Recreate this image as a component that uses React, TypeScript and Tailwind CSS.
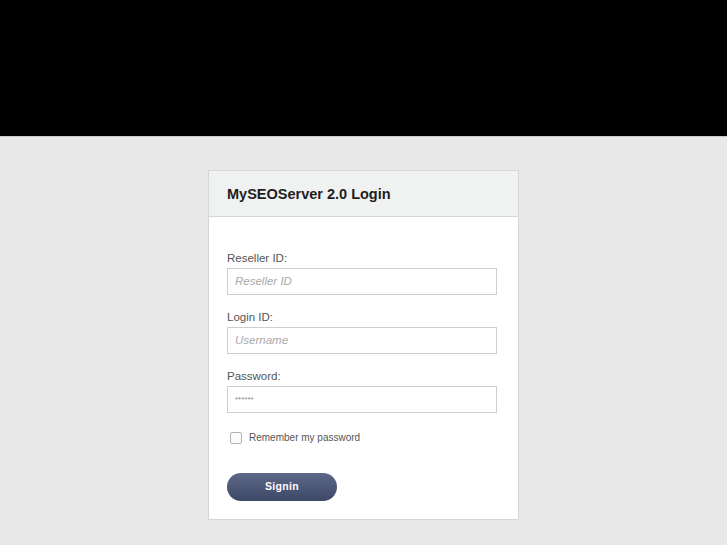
export default function App() {
  return (
    <div className="w-full min-h-[545px] flex flex-col bg-[#e8e8e8] font-['Liberation_Sans',Arial,sans-serif]">
      <div className="w-full h-[136px] bg-black" />
      <div className="w-full h-px bg-[#c9c9c9]" />
      <div className="flex justify-center pt-[33px]">
        <div className="w-[311px] bg-white border border-[#d6d6d6]">
          <div className="h-[46px] bg-[#f0f1f1] border-b border-[#d6d6d6] flex items-center px-[18px] pt-[2px]">
            <span className="text-[14.5px] font-bold text-[#1e1e1e]">MySEOServer 2.0 Login</span>
          </div>
          <div className="px-[18px] pt-[34px] pb-[18px]">
            <Field label="Reseller ID:" placeholder="Reseller ID" />
            <Field label="Login ID:" placeholder="Username" />
            <Field label="Password:" placeholder="******" small />
            <div className="flex items-center mt-[18px] ml-[3px] h-[13px]">
              <span className="w-[12px] h-[12px] border border-[#b5b5b5] rounded-[2px] bg-[#fafafa]" />
              <span className="ml-[7px] text-[10px] text-[#555]">Remember my password</span>
            </div>
            <button className="mt-[29px] w-[110px] h-[28px] rounded-full bg-gradient-to-b from-[#5d6786] to-[#3e4868] text-white text-[10.5px] font-bold tracking-[0.3px]">
              Signin
            </button>
          </div>
        </div>
      </div>
    </div>
  );
}

function Field({ label, placeholder, small }: { label: string; placeholder: string; small?: boolean }) {
  return (
    <div className="mb-[15px]">
      <div className="text-[11.5px] leading-[14px] text-[#555]">{label}</div>
      <div className="mt-[3px] w-[270px] h-[27px] border border-[#cfcfcf] flex items-center px-[7px]">
        <span className={small ? "text-[8px] text-[#888]" : "text-[11.5px] italic text-[#aaa]"}>{placeholder}</span>
      </div>
    </div>
  );
}
